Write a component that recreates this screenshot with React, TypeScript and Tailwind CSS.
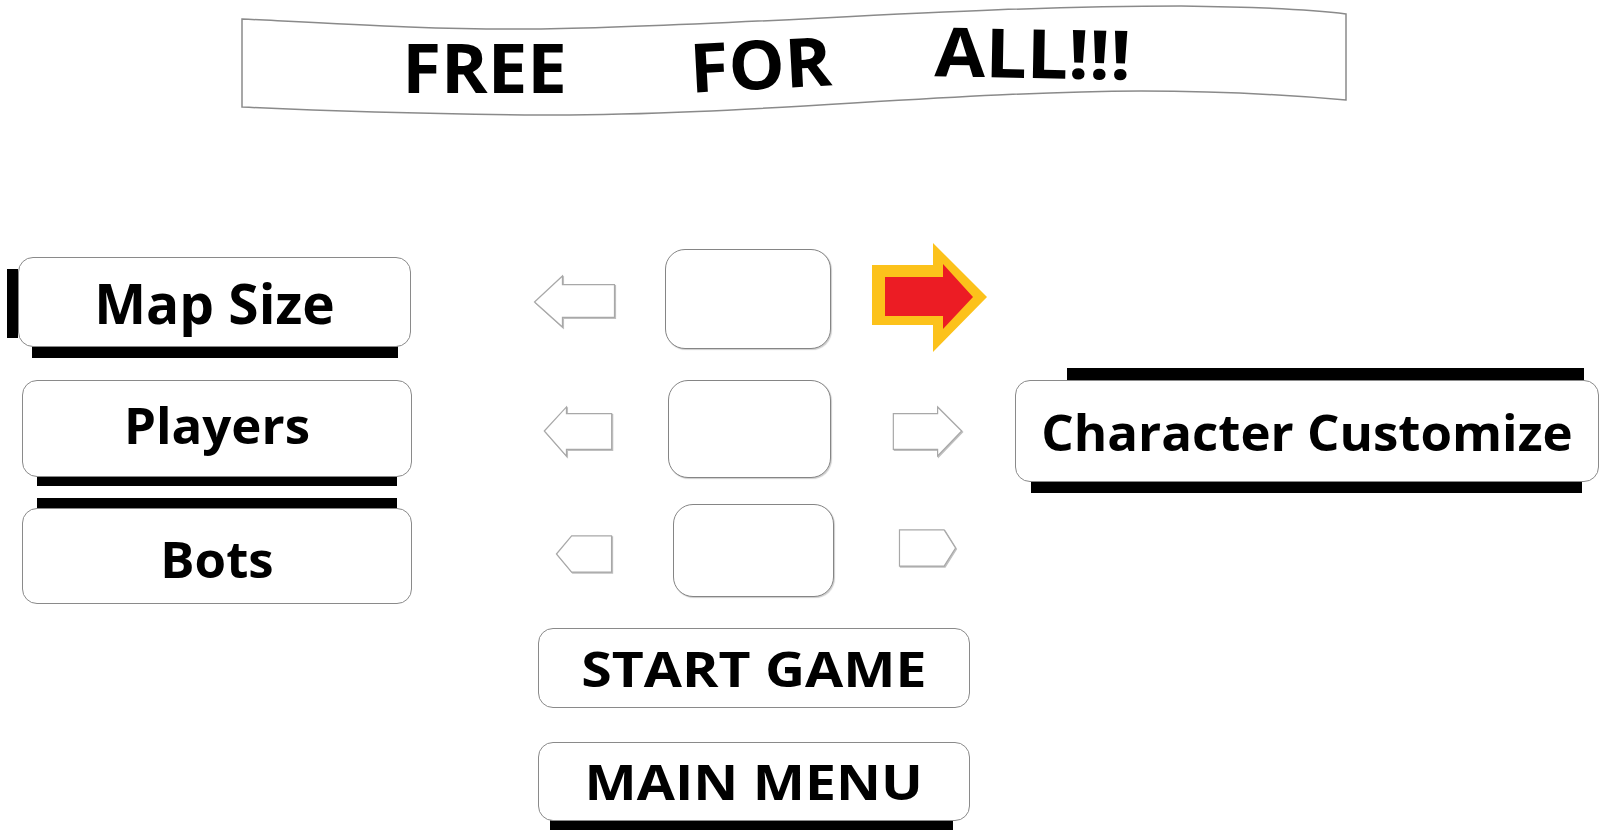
import React from 'react';

type Pt = [number, number];

const toPoints = (pts: Pt[]) => pts.map(([x, y]) => `${x},${y}`).join(' ');

const WhiteArrow: React.FC<{ w: number; h: number; pts: Pt[]; className?: string }> = ({ w, h, pts, className }) => (
  <svg width={w} height={h} viewBox={`-1 -1 ${w + 2} ${h + 2}`} className={`shrink-0 overflow-visible drop-shadow-[1px_1px_0.5px_rgba(0,0,0,0.25)] ${className ?? ''}`}>
    <polygon points={toPoints(pts)} fill="#ffffff" stroke="#a8a8a8" strokeWidth={1.25} strokeLinejoin="miter" />
  </svg>
);

const RedArrow: React.FC<{ className?: string }> = ({ className }) => (
  <svg width={115} height={109} viewBox="0 0 115 109" className={`shrink-0 ${className ?? ''}`}>
    <polygon points={toPoints([[0, 22], [61, 22], [61, 0], [115, 54], [61, 109], [61, 82], [0, 82]])} fill="#fcc21b" />
    <polygon points={toPoints([[13, 34], [71, 34], [71, 21], [101, 54], [71, 86], [71, 73], [13, 73]])} fill="#ec1c24" />
  </svg>
);

const ValueBox: React.FC<{ className: string }> = ({ className }) => (
  <div className={`shrink-0 bg-white border border-[#858585] rounded-[20px] shadow-[1px_1px_1px_rgba(0,0,0,0.2)] ${className}`} />
);

const Banner: React.FC = () => (
  <div className="relative ml-[241px] w-[1106px] h-[113px]">
    <svg className="absolute inset-0" width={1106} height={113} viewBox="0 0 1106 113">
      <path
        d="M1 15 C 100 20 200 26 300 25 C 500 22 720 2 940 2 C 1020 3 1075 6 1105 10 L 1105 96 C 1060 92 990 87 900 87 C 700 88 500 112 300 111 C 180 110 80 107 1 103 Z"
        fill="#ffffff"
        stroke="#8a8a8a"
        strokeWidth={1.5}
      />
    </svg>
    <div className="relative flex items-start text-[68px] font-bold leading-none text-black whitespace-nowrap">
      <span className="ml-[162px] mt-[29px] w-[163px] flex justify-center scale-x-[1.04]">FREE</span>
      <span className="ml-[123px] mt-[25px] w-[143px] flex justify-center -rotate-3 scale-x-[1.04]">FOR</span>
      <span className="ml-[99px] mt-[14px] w-[204px] flex justify-center rotate-1 scale-x-[1.08]">ALL!!!</span>
    </div>
  </div>
);

export default function App() {
  return (
    <div className="w-[1600px] h-[830px] bg-white overflow-hidden font-['Open_Sans',sans-serif] text-black">
      <header className="h-[243px] pt-[4px]">
        <Banner />
      </header>

      <main className="flex items-start">
        {/* left settings */}
        <div className="w-[412px] shrink-0 flex flex-col items-start">
          <div className="relative ml-[18px] mt-[14px] w-[393px] h-[90px]">
            <div className="absolute left-[-11px] top-[12px] w-[11px] h-[69px] bg-black" />
            <div className="absolute left-[14px] top-[89px] w-[366px] h-[12px] bg-black" />
            <button className="relative w-full h-full flex items-center justify-center bg-white border border-[#8a8a8a] rounded-[15px] text-[55px] font-bold leading-none">
              Map Size
            </button>
          </div>
          <div className="relative ml-[22px] mt-[33px] w-[390px] h-[97px]">
            <div className="absolute left-[15px] top-[95px] w-[360px] h-[11px] bg-black" />
            <button className="relative w-full h-full flex items-center justify-center bg-white border border-[#8a8a8a] rounded-[15px] text-[51px] font-bold leading-none pb-[8px]">
              Players
            </button>
          </div>
          <div className="relative ml-[22px] mt-[31px] w-[390px] h-[96px]">
            <div className="absolute left-[15px] top-[-10px] w-[360px] h-[11px] bg-black" />
            <button className="relative w-full h-full flex items-center justify-center bg-white border border-[#8a8a8a] rounded-[15px] text-[51px] font-bold leading-none pt-[4px]">
              Bots
            </button>
          </div>
        </div>

        {/* selectors */}
        <div className="ml-[121px] w-[454px] shrink-0 flex flex-col items-start">
          <div className="h-[137px] flex items-start">
            <WhiteArrow w={83} h={53} className="mt-[32px]" pts={[[0, 27], [29, 0], [29, 9], [83, 9], [83, 43], [29, 43], [29, 53]]} />
            <ValueBox className="ml-[49px] mt-[6px] w-[166px] h-[100px]" />
            <RedArrow className="ml-[41px]" />
          </div>
          <div className="h-[124px] flex items-start">
            <WhiteArrow w={70} h={51} className="ml-[10px] mt-[26px]" pts={[[0, 25], [23, 0], [23, 7], [70, 7], [70, 44], [23, 44], [23, 51]]} />
            <ValueBox className="ml-[55px] w-[163px] h-[98px]" />
            <WhiteArrow w={71} h={51} className="ml-[61px] mt-[26px]" pts={[[0, 7], [46, 7], [46, 0], [71, 25], [46, 51], [46, 44], [0, 44]]} />
          </div>
          <div className="h-[124px] flex items-start">
            <WhiteArrow w={58} h={38} className="ml-[22px] mt-[31px]" pts={[[0, 19], [16, 0], [58, 0], [58, 38], [16, 38]]} />
            <ValueBox className="ml-[60px] w-[161px] h-[93px]" />
            <WhiteArrow w={59} h={38} className="ml-[64px] mt-[25px]" pts={[[0, 0], [47, 0], [59, 19], [47, 38], [0, 38]]} />
          </div>
          <button className="ml-[5px] w-[432px] h-[80px] flex items-center justify-center bg-white border border-[#8a8a8a] rounded-[15px] text-[49px] font-bold leading-none">
            <span className="inline-block scale-x-[1.13]">START GAME</span>
          </button>
          <div className="relative ml-[5px] mt-[34px] w-[432px] h-[79px]">
            <div className="absolute left-[12px] top-[78px] w-[403px] h-[10px] bg-black" />
            <button className="relative w-full h-full flex items-center justify-center bg-white border border-[#8a8a8a] rounded-[15px] text-[49px] font-bold leading-none">
              <span className="inline-block scale-x-[1.13]">MAIN MENU</span>
            </button>
          </div>
        </div>

        {/* customize */}
        <div className="relative ml-[28px] mt-[137px] w-[584px] h-[102px] shrink-0">
          <div className="absolute left-[52px] top-[-12px] w-[517px] h-[12px] bg-black" />
          <div className="absolute left-[16px] top-[101px] w-[551px] h-[12px] bg-black" />
          <button className="relative w-full h-full flex items-center justify-center bg-white border border-[#8a8a8a] rounded-[15px] text-[51px] font-bold leading-none">
            Character Customize
          </button>
        </div>
      </main>
    </div>
  );
}
